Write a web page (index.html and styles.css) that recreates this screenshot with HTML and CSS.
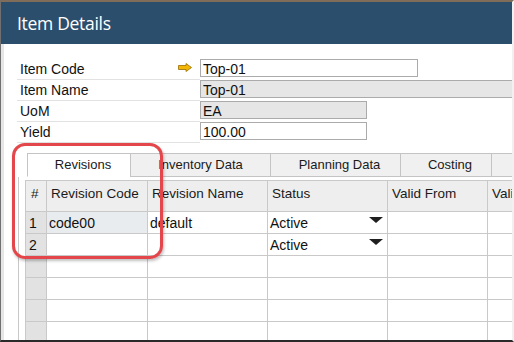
FILE: index.html
```html
<!DOCTYPE html>
<html>
<head>
<meta charset="utf-8">
<link rel="stylesheet" href="styles.css">
</head>
<body>
<div class="window">
  <div class="titlebar">Item Details</div>
  <div class="content">
    <div class="form">
      <div class="row">
        <div class="label"><span>Item Code</span>
          <svg class="arrow" width="14" height="9" viewBox="0 0 14 9"><polygon points="0.5,2.5 8,2.5 8,0.5 13.5,4.5 8,8.5 8,6.5 0.5,6.5" fill="#f2b705" stroke="#9a6c00" stroke-width="0.8"/></svg>
        </div>
        <div class="field w218">Top-01</div>
      </div>
      <div class="row">
        <div class="label"><span>Item Name</span></div>
        <div class="field ro wide">Top-01</div>
      </div>
      <div class="row">
        <div class="label"><span>UoM</span></div>
        <div class="field ro w167">EA</div>
      </div>
      <div class="row">
        <div class="label"><span>Yield</span></div>
        <div class="field w167">100.00</div>
      </div>
    </div>

    <div class="tabs">
      <div class="tab active t1">Revisions</div>
      <div class="tab t2">Inventory Data</div>
      <div class="tab t3">Planning Data</div>
      <div class="tab t4">Costing</div>
      <div class="tab t5"></div>
    </div>

    <div class="panel">
      <div class="grid">
        <div class="hd num">#</div>
        <div class="hd">Revision Code</div>
        <div class="hd">Revision Name</div>
        <div class="hd">Status</div>
        <div class="hd">Valid From</div>
        <div class="hd">Valid To</div>

        <div class="cell num">1</div>
        <div class="cell sel">code00</div>
        <div class="cell">default</div>
        <div class="cell status"><span>Active</span><svg class="tri" width="14" height="6" viewBox="0 0 14 6"><polygon points="0,0 14,0 7,6" fill="#1f1f1f"/></svg></div>
        <div class="cell"></div>
        <div class="cell"></div>

        <div class="cell num">2</div>
        <div class="cell"></div>
        <div class="cell"></div>
        <div class="cell status"><span>Active</span><svg class="tri" width="14" height="6" viewBox="0 0 14 6"><polygon points="0,0 14,0 7,6" fill="#1f1f1f"/></svg></div>
        <div class="cell"></div>
        <div class="cell"></div>

        <div class="cell num"></div><div class="cell"></div><div class="cell"></div><div class="cell"></div><div class="cell"></div><div class="cell"></div>
        <div class="cell num"></div><div class="cell"></div><div class="cell"></div><div class="cell"></div><div class="cell"></div><div class="cell"></div>
        <div class="cell num"></div><div class="cell"></div><div class="cell"></div><div class="cell"></div><div class="cell"></div><div class="cell"></div>
        <div class="cell num"></div><div class="cell"></div><div class="cell"></div><div class="cell"></div><div class="cell"></div><div class="cell"></div>
      </div>
    </div>
  </div>
  <div class="highlight"></div>
</div>
</body>
</html>
```
FILE: styles.css
```css
html, body {
  margin: 0;
  padding: 0;
  background: #fff;
}

.window {
  position: relative;
  width: 514px;
  height: 342px;
  box-sizing: border-box;
  overflow: hidden;
  background: #fff;
  border-top: 2px solid #7f6d59;
  border-left: 1px solid #707070;
  border-right: 2px solid #f1f1f1;
  border-bottom: 2px solid #2a2a2a;
  font-family: "Liberation Sans", Arial, sans-serif;
  color: #111;
}

.titlebar {
  height: 42px;
  background: #2c4e6d;
  color: #fff;
  font-family: "Open Sans", Lato, sans-serif;
  font-size: 17.5px;
  line-height: 42px;
  padding-left: 16px;
  letter-spacing: -0.3px;
}

.content {
  border-left: 3px solid #e6e6e6;
  height: 300px;
}

.form {
  padding: 15px 0 0 13px;
}

.row {
  display: flex;
  height: 21px;
}

.label {
  width: 183px;
  flex-shrink: 0;
  box-sizing: border-box;
  height: 21px;
  border-bottom: 1px solid #e2e2e2;
  padding: 0 8px 0 3px;
  display: flex;
  justify-content: space-between;
  align-items: flex-start;
  font-size: 14px;
  line-height: 20px;
}

.arrow {
  margin-top: 4px;
}

.field {
  flex-shrink: 0;
  box-sizing: border-box;
  height: 18px;
  border: 1px solid #ababab;
  background: #fff;
  padding: 1px 0 0 2px;
  font-size: 14px;
  line-height: 16px;
}

.field.ro {
  background: #e6e6e6;
}

.w218 { width: 218px; }
.w167 { width: 167px; }
.wide { width: 330px; }

.tabs {
  display: flex;
  margin: 10px 0 0 23px;
  height: 24px;
}

.tab {
  flex-shrink: 0;
  box-sizing: border-box;
  height: 24px;
  border: 1px solid #c4c4c4;
  background: #f0f0f0;
  font-size: 13px;
  line-height: 22px;
  text-align: center;
  padding-left: 8px;
  margin-left: -1px;
  color: #1a1a1a;
}

.tab.active {
  background: #fff;
  border-bottom-color: #fff;
  margin-left: 0;
}

.t1 { width: 104px; }
.t2 { width: 141px; padding-left: 0; }
.t3 { width: 131px; }
.t4 { width: 92px; }
.t5 { width: 40px; }

.panel {
  margin-left: 14px;
  border-left: 1px solid #c8c8c8;
  padding: 3px 0 0 6px;
  height: 200px;
}

.grid {
  display: grid;
  grid-template-columns: 21px 101px 120px 120px 100px 80px;
  grid-template-rows: 31px;
  grid-auto-rows: 22px;
  width: max-content;
  border-top: 1px solid #c9c9c9;
  border-left: 1px solid #c9c9c9;
}

.hd, .cell {
  box-sizing: border-box;
  border-right: 1px solid #c9c9c9;
  border-bottom: 1px solid #c9c9c9;
  white-space: nowrap;
  overflow: hidden;
}

.hd {
  height: 31px;
  background: #eeeeee;
  font-size: 13.5px;
  line-height: 16px;
  padding: 5px 0 0 4px;
  color: #1a1a1a;
}

.hd.num {
  padding-left: 5px;
}

.cell {
  height: 22px;
  font-size: 14px;
  line-height: 16px;
  padding: 3px 0 0 2px;
}

.cell.num {
  background: #e2e2e2;
  padding-left: 3px;
}

.cell.sel {
  background: #e9ecef;
}

.cell.status {
  display: flex;
  justify-content: space-between;
  align-items: flex-start;
  padding-right: 4px;
}

.tri {
  margin-top: 2px;
}

.highlight {
  position: absolute;
  left: 11px;
  top: 141px;
  width: 151px;
  height: 116px;
  box-sizing: border-box;
  border: 3px solid #e3474c;
  border-radius: 13px;
  box-shadow: 1px 2px 3px rgba(0, 0, 0, 0.25);
}
```
